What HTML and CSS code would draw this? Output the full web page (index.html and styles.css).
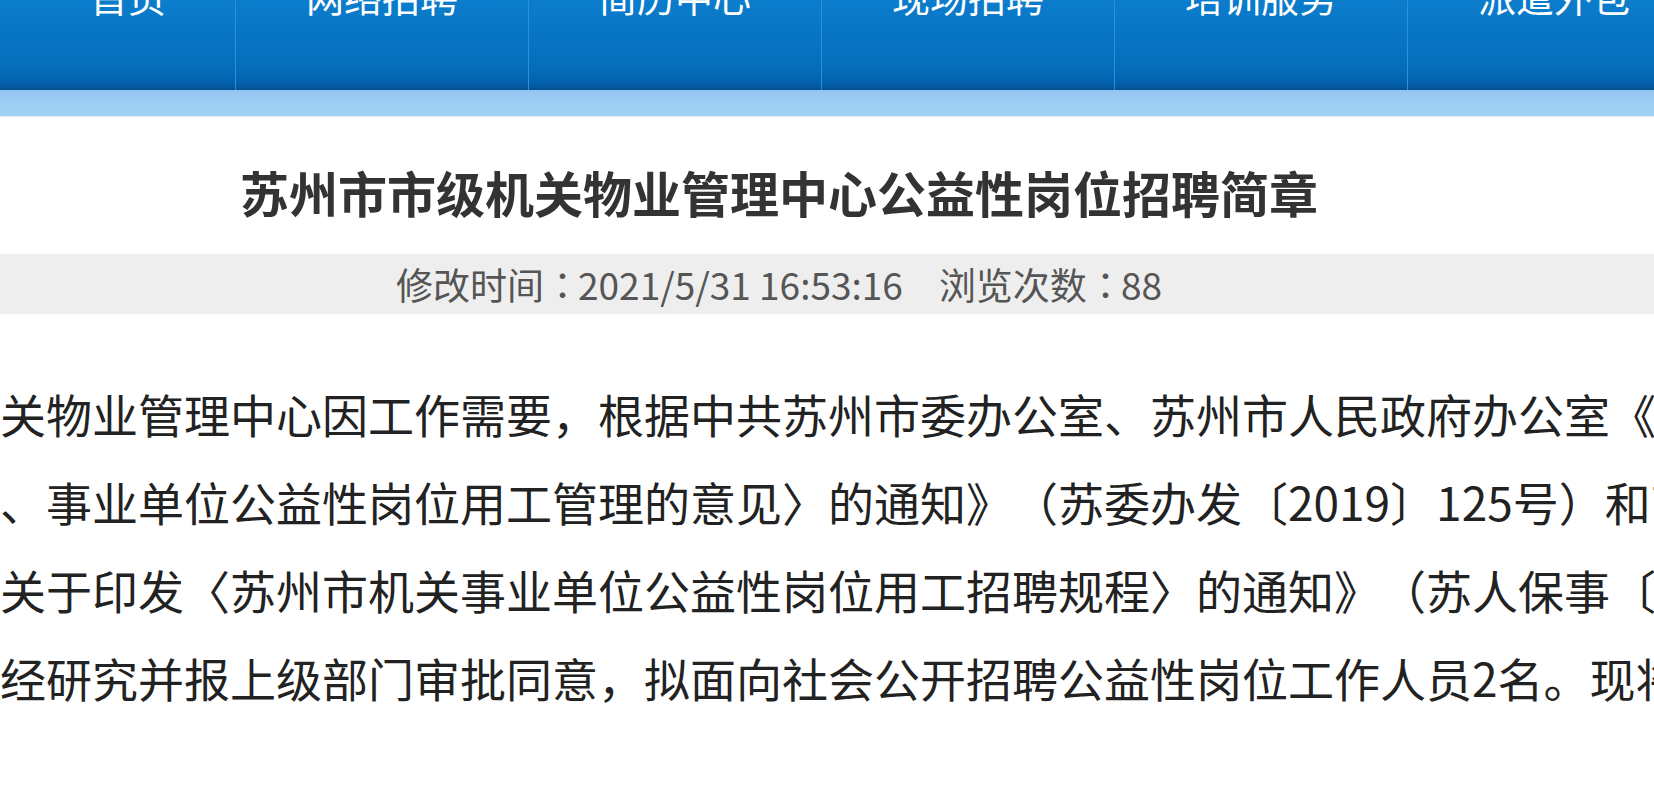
FILE: index.html
```html
<!DOCTYPE html>
<html lang="zh-CN">
<head>
<meta charset="utf-8">
<title>苏州市市级机关物业管理中心公益性岗位招聘简章</title>
<link rel="stylesheet" href="styles.css">
</head>
<body>
<header class="topnav">
  <nav class="nav">
    <a class="nav-item first" href="#"><span class="nav-label">首页</span></a>
    <a class="nav-item" href="#"><span class="nav-label">网络招聘</span></a>
    <a class="nav-item" href="#"><span class="nav-label">简历中心</span></a>
    <a class="nav-item" href="#"><span class="nav-label">现场招聘</span></a>
    <a class="nav-item" href="#"><span class="nav-label">培训服务</span></a>
    <a class="nav-item" href="#"><span class="nav-label">派遣外包</span></a>
  </nav>
  <div class="subbar"></div>
</header>
<main class="article">
  <h1 class="title">苏州市市级机关物业管理中心公益性岗位招聘简章</h1>
  <div class="meta"><span class="meta-item">修改时间<span class="colon">：</span>2021/5/31 16:53:16</span><span class="meta-item">浏览次数<span class="colon">：</span>88</span></div>
  <div class="content">
    <p class="line">关物业管理中心因工作需要，根据中共苏州市委办公室、苏州市人民政府办公室《关于印发</p>
    <p class="line">、事业单位公益性岗位用工管理的意见〉的通知》（苏委办发〔2019〕125号）和苏州市人力资源</p>
    <p class="line">关于印发〈苏州市机关事业单位公益性岗位用工招聘规程〉的通知》（苏人保事〔2019〕</p>
    <p class="line">经研究并报上级部门审批同意，拟面向社会公开招聘公益性岗位工作人员2名。现将有关事项公告如下：</p>
  </div>
</main>
</body>
</html>
```

FILE: styles.css
```css
html, body {
  margin: 0;
  padding: 0;
  background: #ffffff;
  overflow: hidden;
}

body {
  font-family: "Noto Sans CJK SC", "Noto Sans", sans-serif;
  width: 1654px;
  height: 800px;
  text-spacing-trim: space-all;
}

.topnav {
  display: block;
}

.nav {
  display: flex;
  height: 90px;
  padding-left: 21px;
  overflow: hidden;
  background: linear-gradient(to bottom, #0b7dcc 0%, #0774c2 45%, #056eba 76%, #0466b2 86%, #045ca4 95%, #03518c 100%);
}

.nav-item {
  flex: 0 0 293px;
  box-sizing: border-box;
  border-left: 1px solid #2a90e2;
  display: flex;
  justify-content: center;
  align-items: flex-start;
  color: #ffffff;
  text-decoration: none;
}

.nav-item.first {
  flex-basis: 214px;
  border-left: none;
}

.nav-label {
  font-size: 38px;
  line-height: 38px;
  margin-top: -23px;
  white-space: nowrap;
}

.subbar {
  height: 26px;
  background: linear-gradient(to bottom, #92c6f0 0%, #9dcdf4 40%, #a2d1f5 100%);
  border-bottom: 1px solid #e3ebf2;
}

.article {
  display: block;
}

.title {
  margin: 0;
  padding: 45px 96px 32px 0;
  font-size: 49px;
  line-height: 60px;
  font-weight: bold;
  color: #333333;
  text-align: center;
  white-space: nowrap;
}

.meta {
  display: flex;
  justify-content: center;
  gap: 36px;
  height: 60px;
  line-height: 60px;
  background: #eeeeee;
  padding-right: 96px;
  font-size: 37px;
  color: #555555;
  white-space: nowrap;
}

.colon {
  display: inline-block;
  width: 34px;
  text-align: center;
  font-family: "Noto Sans CJK TC", "Noto Sans CJK SC", sans-serif;
  overflow: hidden;
  vertical-align: top;
}

.content {
  padding-top: 55px;
  overflow: hidden;
}

.line {
  margin: 0;
  font-size: 46px;
  line-height: 88px;
  color: #222222;
  white-space: nowrap;
}
```
